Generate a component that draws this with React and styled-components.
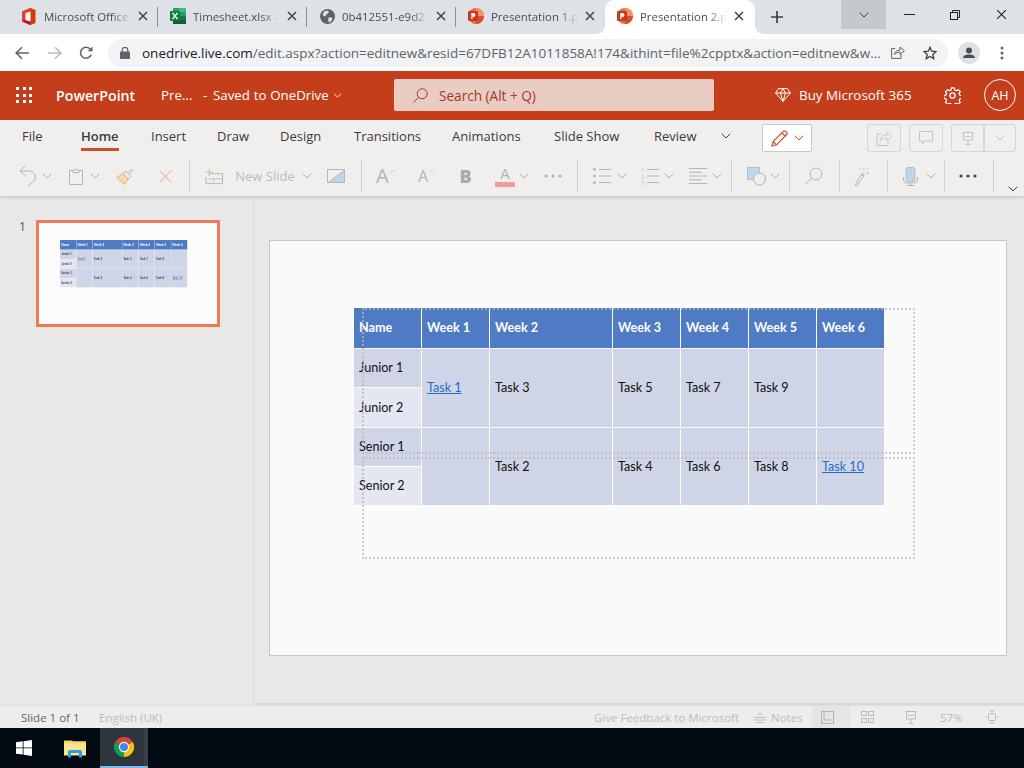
import React from "react";
import styled, { createGlobalStyle, css } from "styled-components";

const Global = createGlobalStyle`
  * { box-sizing: border-box; }
  html, body { margin: 0; padding: 0; background: #e9e8e7; }
  body { font-family: "Open Sans", "Liberation Sans", sans-serif; }
`;

const Page = styled.div`
  width: 1024px; height: 768px; overflow: hidden;
  display: flex; flex-direction: column;
`;

/* ---------- chrome tab strip ---------- */
const TabStrip = styled.div`
  height: 34px; flex: none; background: #dee1e6; display: flex; padding-left: 9px;
`;
const activeFlares = css`
  &::before, &::after {
    content: ""; position: absolute; bottom: 0; top: auto; width: 8px; height: 8px;
  }
  &::before { left: -8px; background: radial-gradient(circle at 0 0, transparent 7.5px, #fff 8px); }
  &::after { right: -8px; background: radial-gradient(circle at 100% 0, transparent 7.5px, #fff 8px); }
`;
const BrowserTab = styled.div`
  position: relative;
  width: ${p => (p.$active ? 150 : 149)}px; height: 34px; flex: none;
  display: flex; align-items: center; padding: ${p => (p.$active ? "0 8px 2px 12px" : "0 7px 2px 12px")};
  background: ${p => (p.$active ? "#fff" : "transparent")};
  border-radius: ${p => (p.$active ? "9px 9px 0 0" : "0")};
  ${p => p.$active ? activeFlares : css`
    &::after {
      content: ""; position: absolute; right: 0; top: 7px; height: 20px; width: 1px;
      background: ${p.$sep ? "#8a8d92" : "transparent"};
    }
  `}
`;
const TabIcon = styled.span`
  width: 16px; height: 16px; flex: none; display: flex; align-items: center; justify-content: center;
`;
const TabTitle = styled.span`
  width: 91px; margin-left: 7px; flex: none; overflow: hidden; white-space: nowrap;
  font-size: 11.4px; color: #4a4d51;
  -webkit-mask-image: linear-gradient(90deg, #000 74%, transparent 96%);
  mask-image: linear-gradient(90deg, #000 74%, transparent 96%);
`;
const TabClose = styled.span`
  width: 16px; height: 16px; flex: none; display: flex; align-items: center; justify-content: center;
`;
const NewTab = styled.span`
  width: 44px; flex: none; display: flex; align-items: center; justify-content: center; padding-bottom: 1px;
`;
const StripRight = styled.div`
  margin-left: 42px; display: flex; align-items: flex-start;
`;
const WinBtn = styled.div`
  width: ${p => p.$w}px; height: 29px; flex: none; display: flex; align-items: center; justify-content: center;
  background: ${p => (p.$on ? "#c5c8cc" : "transparent")};
`;

/* ---------- address bar ---------- */
const AddressBar = styled.div`
  height: 37px; flex: none; background: #fff; display: flex; align-items: center;
`;
const NavBtn = styled.span`
  width: ${p => p.$w}px; margin-left: ${p => p.$l || 0}px; flex: none;
  display: flex; align-items: center; justify-content: center;
`;
const Omnibox = styled.div`
  width: 840px; height: 28px; margin-left: 15px; flex: none; border-radius: 14px; background: #f1f3f4;
  display: flex; align-items: center; padding-left: 12px;
`;
const Url = styled.span`
  width: 739px; margin-left: 12px; flex: none; font-size: 13.5px; color: #5f6368; white-space: nowrap;
  b { font-weight: 400; color: #202124; }
`;

/* ---------- suite header ---------- */
const Suite = styled.div`
  height: 49px; flex: none; background: #c43e1c; color: #fff; display: flex; align-items: center; padding-bottom: 1px;
`;
const Waffle = styled.span`
  margin-left: 16px; width: 16px; height: 16px; flex: none;
  display: grid; grid-template-columns: repeat(3, 3px); grid-auto-rows: 3px; gap: 3.5px;
  i { background: #fff; display: block; }
`;
const AppName = styled.span`
  margin-left: 24px; width: 105px; flex: none; font-size: 14.2px; font-weight: 600;
`;
const DocName = styled.span`
  width: 42px; flex: none; font-size: 13.4px;
`;
const Saved = styled.span`
  flex: none; width: 130px; font-size: 13.3px; white-space: nowrap; word-spacing: .3px;
  i { font-style: normal; margin-right: 2px; }
`;
const SearchBox = styled.div`
  margin-left: 52px; width: 320px; height: 32px; flex: none; background: #e9cdc3; border-radius: 2px;
  display: flex; align-items: center; padding-left: 19px; color: #a23a1e; font-size: 13.6px; gap: 11px;
`;
const Buy = styled.div`
  margin-left: 61px; width: 150px; flex: none; display: flex; align-items: center; gap: 8px; font-size: 13.4px; white-space: nowrap;
`;
const Gear = styled.span`
  margin-left: 15px; width: 24px; flex: none; display: flex; justify-content: center;
`;
const Avatar = styled.span`
  margin-left: 20px; width: 32px; height: 32px; flex: none; border: 1px solid #fff; border-radius: 50%;
  display: flex; align-items: center; justify-content: center; font-size: 12.5px;
`;

/* ---------- ribbon ---------- */
const Ribbon = styled.div`
  height: 76px; flex: none; background: #f0efee; box-shadow: 0 1px 4px rgba(0,0,0,.18); position: relative; z-index: 1;
`;
const RibbonTabs = styled.div`
  height: 36px; padding: 0 0 4px 22px; display: flex; align-items: center;
`;
const RibbonTab = styled.span`
  position: relative; width: ${p => p.$w}px; flex: none; font-size: 13px; color: #3a3a3a;
  font-weight: ${p => (p.$active ? 600 : 400)};
  line-height: 18px;
  span { position: relative; display: inline-block; }
  span::after {
    content: ""; display: ${p => (p.$active ? "block" : "none")}; position: absolute; left: 0; right: 0; bottom: -6px; height: 3px;
    background: #c8502e;
  }
`;
const MoreTabs = styled.span`
  width: 36px; flex: none; display: flex; justify-content: center;
`;
const EditBtn = styled.div`
  margin: 4px 0 0 18px; width: 50px; height: 28px; flex: none; background: #fff; border: 1px solid #c8c8c8; border-radius: 2px;
  display: flex; align-items: center; justify-content: center; gap: 6px;
`;
const GhostBtn = styled.div`
  margin: 4px 0 0 ${p => p.$l}px; width: ${p => p.$w}px; height: 28px; flex: none; border: 1px solid #d5d5d4; border-radius: ${p => p.$r || "3px"};
  display: flex; align-items: center; justify-content: center;
`;
const ToolRow = styled.div`
  height: 40px; display: flex; align-items: center;
`;
const Slot = styled.span`
  width: ${p => p.$w}px; margin-left: ${p => p.$l || 0}px; flex: none; height: 24px;
  display: flex; align-items: center; justify-content: center; color: #b4b4b4; white-space: nowrap;
  position: relative;
`;
const Sep = styled.i`
  width: 1px; height: 32px; margin-left: ${p => p.$l || 0}px; flex: none; background: #cfcfce; display: block;
`;
const SlotText = styled.span`
  font-size: 13px; color: #b8bcc2;
`;
const LetterA = styled.span`
  font-size: ${p => p.$s}px; color: #b4b4b4; line-height: 1; font-family: "Open Sans", sans-serif;
`;
const BoldB = styled.span`
  font-size: 18px; font-weight: 800; color: #aaa; line-height: 1;
`;
const ColorA = styled.span`
  display: flex; flex-direction: column; align-items: center; width: 20px; font-size: 15px; color: #b4b4b4; line-height: 15px;
  &::after { content: ""; width: 20px; height: 5px; background: #f29b98; margin-top: 1px; }
`;
const ExpandSlot = styled(Slot)`
  align-items: flex-end; margin-top: 8px;
`;

/* ---------- workspace ---------- */
const Work = styled.div`
  flex: 1; min-height: 0; display: flex; background: #e9e8e7;
`;
const ThumbPane = styled.div`
  width: 254px; flex: none; border-right: 1px solid #dcdcdb; padding: 24px 0 0 19px; display: flex; align-items: flex-start;
`;
const ThumbNo = styled.span`
  width: 17px; flex: none; font-size: 12px; color: #555; line-height: 14px;
`;
const ThumbFrame = styled.div`
  width: 184px; height: 107px; flex: none; border: 3px solid #f0785a; background: #fcfcfc; padding: 17px 0 0 21px;
`;
const MiniTable = styled.div`
  width: 127px; height: 47px;
  & > div { transform: scale(.24); transform-origin: 0 0; }
`;
const Canvas = styled.div`
  flex: 1; display: flex; flex-direction: column; min-width: 0;
`;
const CanvasInner = styled.div`
  flex: 1; padding: 44px 0 0 15px;
`;
const HScroll = styled.div`
  height: 2px; flex: none; background: #d8d8d7;
`;
const Slide = styled.div`
  position: relative; width: 738px; height: 416px; background: #fafafa; border: 1px solid #c8c8c8; padding: 67px 0 0 84px;
`;
const Placeholder = styled.div`
  position: absolute; left: 92px; width: 553px; top: ${p => p.$t}px; height: ${p => p.$h}px;
  border: 2px dotted #b9b9b9; opacity: .7; pointer-events: none;
`;

const Grid = styled.div`
  width: 530px; height: 197px;
  display: grid; grid-template-columns: 67px 67px 122px 67px 67px 67px 67px; column-gap: 1px;
  grid-template-rows: 40px 38px 39px 38px 38px; row-gap: 1px;
  font-family: Lato, "Liberation Sans", sans-serif; font-size: 12.6px; color: #111; background: #fafafa;
`;
const Head = styled.div`
  background: #4f7ac4; color: #fff; font-weight: 700; display: flex; align-items: center; padding: 0 0 2px 5px;
`;
const Row = styled.div`
  grid-column: 1; grid-row: ${p => p.$row};
  background: ${p => (p.$alt ? "#e4e7f1" : "#cfd4e7")}; display: flex; align-items: center; padding: 0 0 ${p => (p.$row === 3 ? 1 : 2)}px 5px;
`;
const Cell = styled.div`
  background: #cfd4e7; display: flex; align-items: center; padding: 0 0 ${p => (p.$row === 2 ? 2 : 0)}px 5px;
  grid-column: ${p => p.$col}; grid-row: ${p => p.$row} / span 2;
  a { color: #1f6fc4; text-decoration: underline; }
`;

/* ---------- status bar ---------- */
const Status = styled.div`
  height: 23px; flex: none; background: #eeedeb; display: flex; align-items: center; font-size: 11.5px; border-top: 1px solid #e0e0df;
  color: #bbb; white-space: nowrap;
`;
const StatusText = styled.span`
  width: ${p => p.$w}px; margin-left: ${p => p.$l || 0}px; flex: none; color: ${p => p.$c || "#bcbcbc"};
`;
const StatusBtn = styled.span`
  width: ${p => p.$w}px; height: 23px; margin-left: ${p => p.$l || 0}px; padding-right: ${p => (p.$on ? 7 : 0)}px; flex: none; display: flex; align-items: center; justify-content: center;
  background: ${p => (p.$on ? "#e6e5e3" : "transparent")};
`;

/* ---------- taskbar ---------- */
const Taskbar = styled.div`
  height: 40px; flex: none; background: #020b14; display: flex; align-items: center;
`;
const TaskIcon = styled.span`
  width: ${p => p.$w}px; margin-left: ${p => p.$l || 0}px; height: 40px; flex: none; display: flex; align-items: center; justify-content: center;
`;
const TaskActive = styled.span`
  width: 44px; height: 40px; margin-left: 14px; padding-left: 4px; flex: none; background: #2f353c; border-bottom: 2px solid #76b9ed;
  display: flex; align-items: center; justify-content: center;
`;
const TaskSliver = styled.span`
  width: 4px; height: 40px; flex: none; background: #3b4047; border-bottom: 2px solid #76b9ed;
`;

/* ---------- icons ---------- */
const Chev = ({ w = 10, c = "#b0b0b0", h = 6, sw = 1 }) => (
  <svg width={w} height={h} viewBox="0 0 10 6" fill="none" stroke={c} strokeWidth={sw}><path d="M.7.7 5 5l4.3-4.3" /></svg>
);
const XIcon = ({ s = 10, c = "#45484c", sw = 1.6 }) => (
  <svg width={s} height={s} viewBox="0 0 10 10" fill="none" stroke={c} strokeWidth={sw}><path d="M1 1l8 8M9 1l-8 8" /></svg>
);
const Office = () => (
  <svg width="14" height="17" viewBox="0 0 14 17">
    <path d="M0 3.5 8.5 0 13.5 2v13l-5 2L0 13.5z" fill="#d83b01" />
    <path d="M0 3.5 8.5 0v3L3.5 5v7L0 13.5z" fill="#e8402a" />
    <path d="M0 13.5 3.5 12l5 1.5V17z" fill="#b4144f" />
    <path d="M3.5 5 8.5 3.4v10.2L3.5 12z" fill="#fff" />
  </svg>
);
const Excel = () => (
  <svg width="16" height="16" viewBox="0 0 16 16">
    <rect x="3" y="0" width="13" height="16" rx="1" fill="#21a366" />
    <rect x="9" y="0" width="7" height="4" fill="#33c481" />
    <rect x="9" y="8" width="7" height="4" fill="#107c41" />
    <rect x="3" y="12" width="13" height="4" fill="#185c37" />
    <rect x="0" y="3" width="10" height="10" rx="1" fill="#107c41" />
    <path d="M2.5 5l5 6M7.5 5l-5 6" stroke="#fff" strokeWidth="1.3" />
  </svg>
);
const Globe = () => (
  <svg width="15" height="15" viewBox="0 0 15 15">
    <circle cx="7.5" cy="7.5" r="7.5" fill="#5f6368" />
    <path d="M4 2.500l3.500-1 1.500 1.500L7 5 5 7.500 2.500 6zM9 8l3.500 1-1 3-2.500 1.500L8 11z" fill="#dee1e6" />
  </svg>
);
const Ppt = () => (
  <svg width="16" height="16" viewBox="0 0 16 16">
    <circle cx="8" cy="8" r="8" fill="#ed6c47" />
    <path d="M8 0a8 8 0 0 1 8 8H8z" fill="#ff8f6b" />
    <path d="M8 16a8 8 0 0 0 8-8H8z" fill="#d35230" />
    <rect x="0" y="3" width="10" height="10" rx="1" fill="#c43e1c" />
    <path d="M3.300 11V5h2.200a1.900 1.900 0 0 1 0 3.900H4.500V11z" fill="#fff" />
  </svg>
);
const Lock = () => (
  <svg width="10" height="12" viewBox="0 0 10 12"><path d="M2.200 5V3.200a2.800 2.800 0 0 1 5.600 0V5" fill="none" stroke="#5f6368" strokeWidth="1.200" /><rect y="4.600" width="10" height="7.400" rx="1" fill="#5f6368" /></svg>
);
const Search = ({ c = "#a23a1e" }) => (
  <svg width="15" height="15" viewBox="0 0 15 15" fill="none" stroke={c} strokeWidth="1"><circle cx="9.200" cy="5.800" r="5" /><path d="M5.500 9.500 .7 14.300" /></svg>
);
const Diamond = () => (
  <svg width="16" height="14" viewBox="0 0 16 14" fill="none" stroke="#fff" strokeWidth="1"><path d="M3.500.6h9L15.400 5 8 13.400.6 5zM.6 5h14.800M5.500 5 8 13.400 10.500 5 8 .6z" /></svg>
);
const GearIcon = () => (
  <svg width="17" height="17" viewBox="0 0 24 24" fill="none" stroke="#fff" strokeWidth="1.800" strokeLinejoin="round">
    <circle cx="12" cy="12" r="3.600" />
    <path d="M10 1.500h4l.7 3 2.300 1 2.600-1.600 2.800 2.800-1.600 2.600 1 2.300 3 .7v4l-3 .7-1 2.300 1.600 2.600-2.800 2.800-2.600-1.600-2.300 1-.7 3h-4l-.7-3-2.300-1-2.600 1.600-2.800-2.800 1.600-2.600-1-2.300-3-.7v-4l3-.7 1-2.300-1.600-2.600 2.800-2.800 2.600 1.600 2.300-1z" transform="translate(.5 -.2)" />
  </svg>
);

const Undo = () => (
  <svg width="18" height="22" viewBox="0 0 18 22" fill="none" stroke="#b4b4b4" strokeWidth="1"><path d="M6.500.5 1 6l6 5.500M1 6h9.500a6 6 0 0 1 6 6c0 2.500-1.500 4-3 5l-4.500 4" /></svg>
);
const Clip = () => (
  <svg width="14" height="17" viewBox="0 0 14 17" fill="none" stroke="#b4b4b4" strokeWidth="1"><path d="M4 2.500H.5v14h13v-14H10" /><path d="M4 4.500V2h1.800a1.300 1.300 0 0 1 2.400 0H10v2.500z" /></svg>
);
const Painter = () => (
  <svg width="18" height="17" viewBox="0 0 18 17"><path d="M.8 9.500 7 5.500l5 5.500-3.500 5.500z" fill="#f6d7ae" stroke="#e7b06e" /><path d="M7 5.500 10 3l5 5.500-3 2.500z" fill="#eee" stroke="#b4b4b4" /><path d="M12 4.500 15.500 1l1.500 1.500-3.500 3.500" fill="none" stroke="#b4b4b4" /></svg>
);
const NewSlideIcon = () => (
  <svg width="19" height="17" viewBox="0 0 19 17" fill="none"><path d="M4 5.500h14.500v10.500H1V9" stroke="#b4b4b4" /><path d="M3 11h15M9 11v5" stroke="#c4c4c4" /><path d="M4.500 0v8M.5 4h8" stroke="#a6d8a6" strokeWidth="1.200" /></svg>
);
const LayoutIcon = () => (
  <svg width="18" height="14" viewBox="0 0 18 14"><path d="M17 1.500V13H2z" fill="#bed5ea" /><rect x=".5" y=".5" width="17" height="13" fill="none" stroke="#b4b4b4" /><path d="M2 13 17 1.500" stroke="#b4b4b4" /></svg>
);
const Caret = ({ down }) => (
  <svg width="6" height="4" viewBox="0 0 6 4" fill="none" stroke="#a9cbe4" style={{ marginBottom: 10, marginLeft: 1 }}><path d={down ? "M.5.500 3 3l2.500-2.500" : "M.5 3.500 3 1l2.500 2.500"} /></svg>
);
const Dots = ({ c = "#b4b4b4", w = 18 }) => (
  <svg width={w} height="4" viewBox="0 0 18 4" fill={c}><circle cx="2" cy="2" r="1.600" /><circle cx="9" cy="2" r="1.600" /><circle cx="16" cy="2" r="1.600" /></svg>
);
const Bullets = () => (
  <svg width="18" height="16" viewBox="0 0 18 16"><path d="M0 0h3v3H0zM0 6.500h3v3H0zM0 13h3v3H0z" fill="#a9cbe4" /><path d="M6 1.500h12M6 8h12M6 14.500h12" stroke="#b4b4b4" /></svg>
);
const Numbers = () => (
  <svg width="18" height="20" viewBox="0 0 18 20"><path d="M6 3.500h12M6 10h12M6 16.500h12" stroke="#b4b4b4" /><g fill="#a9cbe4" fontSize="6" fontFamily="Open Sans"><text x="0" y="6">1</text><text x="0" y="12.500">2</text><text x="0" y="19">3</text></g></svg>
);
const AlignIcon = () => (
  <svg width="18" height="16" viewBox="0 0 18 16" stroke="#b4b4b4"><path d="M0 .5h18M0 4.300h13M0 8h18M0 11.800h13M0 15.500h18" /></svg>
);
const Shapes = () => (
  <svg width="20" height="19" viewBox="0 0 20 19"><rect x=".5" y=".5" width="12" height="12" fill="#c3d8ea" stroke="#a7c4de" /><circle cx="12.500" cy="12" r="6" fill="#f0efee" stroke="#b4b4b4" /></svg>
);
const FindIcon = () => (
  <svg width="18" height="18" viewBox="0 0 18 18" fill="none" stroke="#b4b4b4"><circle cx="11" cy="7" r="6" /><path d="M6.500 11 .7 17" /></svg>
);
const Wand = () => (
  <svg width="16" height="20" viewBox="0 0 16 20" fill="none"><path d="M1 19 7 9l2.500 1.500L3 19.500z" stroke="#b4b4b4" /><path d="M7 9l1.500-2.500L11 8l-1.500 2.500z" fill="#a9cbe4" /><path d="M10 1v3M13 4l2-2M12 7h3.500M7 4 5.500 2" stroke="#a9cbe4" /></svg>
);
const Mic = () => (
  <svg width="16" height="19" viewBox="0 0 16 19" fill="none"><rect x="3" y=".5" width="9" height="14" rx="2" fill="#bed5ea" stroke="#a7c4de" /><path d="M.5 10v3a4 4 0 0 0 4 3h6a4 4 0 0 0 4-3v-3M7.500 16v2.500M4 18.500h7" stroke="#b4b4b4" /></svg>
);
const Pencil = () => (
  <svg width="17" height="17" viewBox="0 0 17 17" fill="none" stroke="#c8502e" strokeWidth="1.200"><path d="M1 16l1.200-4.500L12.500 1.200a1.400 1.400 0 0 1 2 0l1.300 1.300a1.400 1.400 0 0 1 0 2L5.500 14.800zM2.200 11.500l3.300 3.300M11 3l3 3" /></svg>
);
const ShareGhost = () => (
  <svg width="16" height="15" viewBox="0 0 16 15" fill="none" stroke="#c4c4c4"><path d="M5 3H1v11.500h11V10" /><path d="M4 10c0-4 3-6 7-6V1l4.500 4.500L11 10V7c-3 0-5 1-7 3z" /></svg>
);
const CommentGhost = () => (
  <svg width="14" height="14" viewBox="0 0 14 14" fill="none" stroke="#c4c4c4"><path d="M.5.500h13v9.500H6L3.500 13v-3h-3z" /></svg>
);
const PresentIcon = ({ c = "#c4c4c4" }) => (
  <svg width="12" height="13" viewBox="0 0 12 13" fill="none" stroke={c}><path d="M.5.500h11M1.500.5v7.500h9V.5M3 4.500h6M6 8v4M3.500 12.500h5" /></svg>
);
const Back = ({ c }) => (
  <svg width="14" height="14" viewBox="0 0 14 14" fill="none" stroke={c} strokeWidth="1.600"><path d="M14 7H1.500M7 1.200 1.200 7 7 12.800" /></svg>
);
const Forward = ({ c }) => (
  <svg width="14" height="14" viewBox="0 0 14 14" fill="none" stroke={c} strokeWidth="1.600"><path d="M0 7h12.500M7 1.200 12.800 7 7 12.800" /></svg>
);
const Reload = () => (
  <svg width="14" height="14" viewBox="0 0 14 14" fill="none" stroke="#5f6368" strokeWidth="1.600"><path d="M12.200 8.500A5.500 5.500 0 1 1 11 3" /><path d="M13.500.5v4.800H8.700z" fill="#5f6368" stroke="none" /></svg>
);
const ShareUrl = () => (
  <svg width="14" height="13" viewBox="0 0 14 13" fill="none" stroke="#5f6368" strokeWidth="1"><path d="M4 2.500H.6V12.400H10V8.500" /><path d="M3.500 8.500c.3-3 2.500-4.500 5.500-4.500V1l4.400 3.800L9 8.500V6C6.800 6 5 7 3.500 8.500z" /></svg>
);
const Star = () => (
  <svg width="14" height="14" viewBox="0 0 14 14" fill="none" stroke="#3c4043" strokeWidth="1.300"><path d="M7 1.300 8.700 5.200l4.300.4-3.200 2.800 1 4.200L7 10.400l-3.800 2.200 1-4.200L1 5.600l4.300-.4z" /></svg>
);
const Profile = () => (
  <svg width="22" height="22" viewBox="0 0 22 22"><circle cx="11" cy="11" r="11" fill="#dee1e6" /><circle cx="11" cy="8.500" r="3" fill="#4a4d51" /><path d="M5 16c0-2.500 3-3.500 6-3.500s6 1 6 3.500z" fill="#4a4d51" /></svg>
);
const VDots = () => (
  <svg width="4" height="14" viewBox="0 0 4 14" fill="#5f6368"><circle cx="2" cy="2" r="1.500" /><circle cx="2" cy="7" r="1.500" /><circle cx="2" cy="12" r="1.500" /></svg>
);
const NotesIcon = () => (
  <svg width="12" height="11" viewBox="0 0 12 11" stroke="#bbb" fill="none"><path d="M0 5.500h12M0 8h12M2 10.500h8M3.500 3 6 .8 8.500 3" /></svg>
);
const NormalView = () => (
  <svg width="13" height="13" viewBox="0 0 13 13" fill="none" stroke="#b4b4b4"><rect x=".5" y=".5" width="12" height="12" /><path d="M3 1v8h7.500" /></svg>
);
const GridView = () => (
  <svg width="13" height="12" viewBox="0 0 13 12" fill="none" stroke="#bbb"><rect x=".5" y=".5" width="5" height="4" /><rect x="7.500" y=".5" width="5" height="4" /><rect x=".5" y="7.500" width="5" height="4" /><rect x="7.500" y="7.500" width="5" height="4" /></svg>
);
const FitIcon = () => (
  <svg width="14" height="14" viewBox="0 0 14 14" fill="none" stroke="#bbb"><rect x="3.500" y="3.500" width="7" height="7" rx="1" /><path d="M7 0v2M5.500 1.500 7 0l1.500 1.500M7 14v-2M5.500 12.500 7 14l1.500-1.500M0 7h2M14 7h-2" /></svg>
);
const WinLogo = () => (
  <svg width="16" height="16" viewBox="0 0 16 16" fill="#fff"><path d="M0 2.300 6.700 1.300V7.500H0zM7.500 1.200 16 0v7.500H7.500zM0 8.300h6.700v6.300L0 13.700zM7.500 8.300H16V16L7.500 14.800z" /></svg>
);
const Folder = () => (
  <svg width="22" height="19" viewBox="0 0 22 19"><path d="M0 1.500h8l2 2h-10z" fill="#e4b64c" /><rect y="2.500" width="22" height="14" fill="#fde48f" /><path d="M0 2.500h22v2H0z" fill="#f6d46b" /><path d="M4 18.500V13a2 2 0 0 1 2-2h10a2 2 0 0 1 2 2v5.500h-3V14H7v4.500z" fill="#2f9fe3" /></svg>
);
const Chrome = () => (
  <svg width="22" height="22" viewBox="0 0 24 24">
    <path d="M12 12 2.470 6.500A11 11 0 0 1 21.530 6.500z" fill="#db4437" />
    <path d="M12 12 21.530 6.500A11 11 0 0 1 12 23z" fill="#f4c20d" />
    <path d="M12 12 12 23A11 11 0 0 1 2.470 6.500z" fill="#0f9d58" />
    <circle cx="12" cy="12" r="5.600" fill="#fff" />
    <circle cx="12" cy="12" r="4.400" fill="#4285f4" />
  </svg>
);

/* ---------- data ---------- */
const browserTabs = [
  { icon: <Office />, title: "Microsoft Office", sep: true },
  { icon: <Excel />, title: "Timesheet.xlsx -", sep: true },
  { icon: <Globe />, title: "0b412551-e9d2-", sep: true },
  { icon: <Ppt />, title: "Presentation 1.p", sep: false },
  { icon: <Ppt />, title: "Presentation 2.p", active: true },
];
const ribbonTabs = [
  ["File", 59], ["Home", 70, true], ["Insert", 66], ["Draw", 63], ["Design", 74],
  ["Transitions", 98], ["Animations", 102], ["Slide Show", 100], ["Review", 54],
];
const weeks = ["Week 1", "Week 2", "Week 3", "Week 4", "Week 5", "Week 6"];
const topTasks = ["Task 3", "Task 5", "Task 7", "Task 9", ""];
const lowTasks = ["Task 2", "Task 4", "Task 6", "Task 8"];

const SlideTable = () => (
  <Grid>
    <Head>Name</Head>
    {weeks.map(w => <Head key={w}>{w}</Head>)}
    <Row $row={2}>Junior 1</Row>
    <Row $row={3} $alt>Junior 2</Row>
    <Row $row={4}>Senior 1</Row>
    <Row $row={5} $alt>Senior 2</Row>
    <Cell $col={2} $row={2}><a href="#t1">Task 1</a></Cell>
    {topTasks.map((t, i) => <Cell key={i} $col={i + 3} $row={2}>{t}</Cell>)}
    <Cell $col={2} $row={4} />
    {lowTasks.map((t, i) => <Cell key={t} $col={i + 3} $row={4}>{t}</Cell>)}
    <Cell $col={7} $row={4}><a href="#t10">Task 10</a></Cell>
  </Grid>
);

export default function App() {
  return (
    <Page>
      <Global />
      <TabStrip>
        {browserTabs.map(t => (
          <BrowserTab key={t.title} $active={t.active} $sep={t.sep}>
            <TabIcon>{t.icon}</TabIcon>
            <TabTitle>{t.title}</TabTitle>
            <TabClose><XIcon /></TabClose>
          </BrowserTab>
        ))}
        <NewTab>
          <svg width="12" height="12" viewBox="0 0 12 12" stroke="#3c4043" strokeWidth="1.700"><path d="M6 0v12M0 6h12" /></svg>
        </NewTab>
        <StripRight>
          <WinBtn $w={45} $on><Chev c="#3c4043" /></WinBtn>
          <WinBtn $w={46}><svg width="11" height="1" viewBox="0 0 11 1"><path d="M0 .5h11" stroke="#222" /></svg></WinBtn>
          <WinBtn $w={46}><svg width="10" height="10" viewBox="0 0 10 10" fill="none" stroke="#222"><path d="M2.500 2V.5h7v7H8" /><rect x=".5" y="2.500" width="7" height="7" /></svg></WinBtn>
          <WinBtn $w={46}><XIcon s={11} c="#222" sw={1} /></WinBtn>
        </StripRight>
      </TabStrip>

      <AddressBar>
        <NavBtn $w={14} $l={15}><Back c="#5f6368" /></NavBtn>
        <NavBtn $w={14} $l={19}><Forward c="#b9bcc0" /></NavBtn>
        <NavBtn $w={14} $l={17}><Reload /></NavBtn>
        <Omnibox>
          <Lock />
          <Url><b>onedrive.live.com</b>/edit.aspx?action=editnew&amp;resid=67DFB12A1011858A!174&amp;ithint=file%2cpptx&amp;action=editnew&amp;w...</Url>
          <NavBtn $w={14} $l={10}><ShareUrl /></NavBtn>
          <NavBtn $w={14} $l={18}><Star /></NavBtn>
        </Omnibox>
        <NavBtn $w={22} $l={10}><Profile /></NavBtn>
        <NavBtn $w={4} $l={20}><VDots /></NavBtn>
      </AddressBar>

      <Suite>
        <Waffle>{Array.from({ length: 9 }, (_, i) => <i key={i} />)}</Waffle>
        <AppName>PowerPoint</AppName>
        <DocName>Pre...</DocName>
        <Saved><i>-</i> Saved to OneDrive</Saved>
        <Chev c="#fff" w={9} h={5} />
        <SearchBox><Search />Search (Alt + Q)</SearchBox>
        <Buy><Diamond />Buy Microsoft 365</Buy>
        <Gear><GearIcon /></Gear>
        <Avatar>AH</Avatar>
      </Suite>

      <Ribbon>
        <RibbonTabs>
          {ribbonTabs.map(([t, w, a]) => (
            <RibbonTab key={t} $w={w} $active={a}><span>{t}</span></RibbonTab>
          ))}
          <MoreTabs><Chev c="#444" /></MoreTabs>
          <EditBtn><Pencil /><Chev c="#c8502e" /></EditBtn>
          <GhostBtn $l={55} $w={34}><ShareGhost /></GhostBtn>
          <GhostBtn $l={8} $w={34}><CommentGhost /></GhostBtn>
          <GhostBtn $l={8} $w={33} $r="3px 0 0 3px"><PresentIcon /></GhostBtn>
          <GhostBtn $l={0} $w={32} $r="0 3px 3px 0"><Chev c="#c4c4c4" /></GhostBtn>
        </RibbonTabs>
        <ToolRow>
          <Slot $l={19} $w={18}><Undo /></Slot>
          <Slot $w={20}><Chev /></Slot>
          <Slot $l={9} $w={20}><Clip /></Slot>
          <Slot $w={18}><Chev /></Slot>
          <Slot $l={11} $w={20}><Painter /></Slot>
          <Slot $l={20} $w={20}><XIcon s={15} c="#f5bcb4" sw={.8} /></Slot>
          <Sep $l={14} />
          <Slot $l={15} $w={18}><NewSlideIcon /></Slot>
          <Slot $l={11} $w={62}><SlotText>New Slide</SlotText></Slot>
          <Slot $l={1} $w={20}><Chev /></Slot>
          <Slot $l={10} $w={18}><LayoutIcon /></Slot>
          <Sep $l={16} />
          <Slot $l={14} $w={19}><LetterA $s={20}>A</LetterA><Caret /></Slot>
          <Slot $l={23} $w={16}><LetterA $s={16}>A</LetterA><Caret down /></Slot>
          <Slot $l={26} $w={11}><BoldB>B</BoldB></Slot>
          <Slot $l={24} $w={20}><ColorA>A</ColorA></Slot>
          <Slot $w={18}><Chev /></Slot>
          <Slot $l={9} $w={22}><Dots /></Slot>
          <Sep $l={13} />
          <Slot $l={15} $w={18}><Bullets /></Slot>
          <Slot $w={22}><Chev /></Slot>
          <Slot $l={8} $w={18}><Numbers /></Slot>
          <Slot $w={20}><Chev /></Slot>
          <Slot $l={10} $w={18}><AlignIcon /></Slot>
          <Slot $w={20}><Chev /></Slot>
          <Sep $l={4} />
          <Slot $l={15} $w={20}><Shapes /></Slot>
          <Slot $w={16}><Chev /></Slot>
          <Sep $l={6} />
          <Slot $l={14} $w={20}><FindIcon /></Slot>
          <Sep $l={15} />
          <Slot $l={12} $w={20}><Wand /></Slot>
          <Sep $l={15} />
          <Slot $l={13} $w={20}><Mic /></Slot>
          <Slot $w={20}><Chev /></Slot>
          <Sep $l={3} />
          <Slot $l={11} $w={24}><Dots c="#444" /></Slot>
          <Sep $l={13} />
          <ExpandSlot $l={9} $w={20}><Chev c="#444" /></ExpandSlot>
        </ToolRow>
      </Ribbon>

      <Work>
        <ThumbPane>
          <ThumbNo>1</ThumbNo>
          <ThumbFrame>
            <MiniTable><div><SlideTable /></div></MiniTable>
          </ThumbFrame>
        </ThumbPane>
        <Canvas>
          <CanvasInner>
            <Slide>
              <SlideTable />
              <Placeholder $t={67} $h={146} />
              <Placeholder $t={216} $h={102} />
            </Slide>
          </CanvasInner>
          <HScroll />
        </Canvas>
      </Work>

      <Status>
        <StatusText $l={21} $w={78} $c="#666">Slide 1 of 1</StatusText>
        <StatusText $w={495}>English (UK)</StatusText>
        <StatusText $w={160}>Give Feedback to Microsoft</StatusText>
        <StatusBtn $w={12}><NotesIcon /></StatusBtn>
        <StatusText $l={5} $w={41}>Notes</StatusText>
        <StatusBtn $w={38} $on><NormalView /></StatusBtn>
        <StatusBtn $l={2} $w={30}><GridView /></StatusBtn>
        <StatusBtn $l={14} $w={30}><PresentIcon c="#bbb" /></StatusBtn>
        <StatusText $l={14} $w={45}>57%</StatusText>
        <StatusBtn $w={14}><FitIcon /></StatusBtn>
      </Status>

      <Taskbar>
        <TaskIcon $l={16} $w={16}><WinLogo /></TaskIcon>
        <TaskIcon $l={32} $w={22}><Folder /></TaskIcon>
        <TaskActive><Chrome /></TaskActive>
        <TaskSliver />
      </Taskbar>
    </Page>
  );
}
